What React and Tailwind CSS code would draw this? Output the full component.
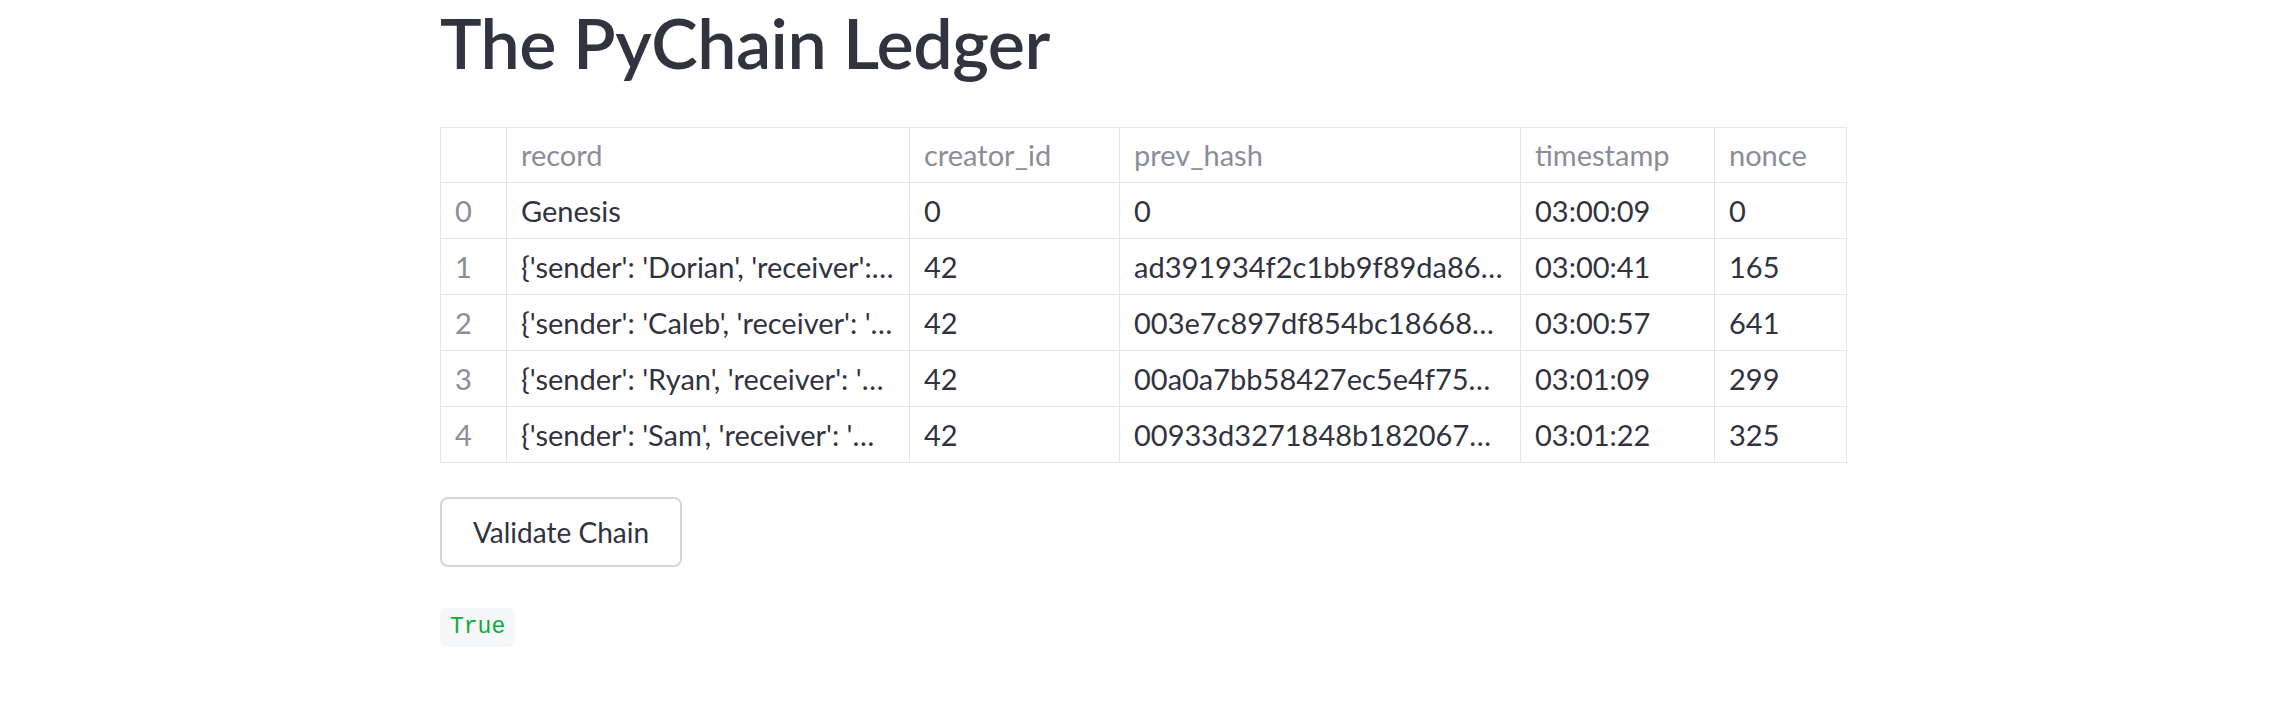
const columns = ["", "record", "creator_id", "prev_hash", "timestamp", "nonce"];

const rows = [
  {
    index: 0,
    record: "Genesis",
    creator_id: "0",
    prev_hash: "0",
    timestamp: "03:00:09",
    nonce: "0",
  },
  {
    index: 1,
    record: "{'sender': 'Dorian', 'receiver': 'Caleb', 'amount': 10.0}",
    creator_id: "42",
    prev_hash: "ad391934f2c1bb9f89da86e1c2b0a7d3f5e4",
    timestamp: "03:00:41",
    nonce: "165",
  },
  {
    index: 2,
    record: "{'sender': 'Caleb', 'receiver': 'Ryan', 'amount': 5.0}",
    creator_id: "42",
    prev_hash: "003e7c897df854bc186686a2f93b1e0c4d7a",
    timestamp: "03:00:57",
    nonce: "641",
  },
  {
    index: 3,
    record: "{'sender': 'Ryan', 'receiver': 'Sam', 'amount': 2.5}",
    creator_id: "42",
    prev_hash: "00a0a7bb58427ec5e4f75b90d1c3e8a6f2b4",
    timestamp: "03:01:09",
    nonce: "299",
  },
  {
    index: 4,
    record: "{'sender': 'Sam', 'receiver': 'Dorian', 'amount': 1.0}",
    creator_id: "42",
    prev_hash: "00933d3271848b1820673f5e9a0c2d4b7e61",
    timestamp: "03:01:22",
    nonce: "325",
  },
];

const widths = ["w-[66px]", "w-[403px]", "w-[210px]", "w-[401px]", "w-[194px]", "w-[132px]"];

const cellBase =
  "border border-[#e6e6e6] px-[14px] whitespace-nowrap overflow-hidden text-ellipsis";

export default function App() {
  return (
    <div className="min-h-[709px] bg-white font-['Lato','Noto_Sans',sans-serif] text-[#31333f]">
      <div className="w-[1407px] mx-auto">
        <h1 className="text-[70px] leading-[84px] font-semibold tracking-[-0.5px] text-[#31333f]">
          The PyChain Ledger
        </h1>

        <table className="mt-[43px] table-fixed border-collapse w-[1407px] text-[29px]">
          <colgroup>
            {widths.map((w, i) => (
              <col key={i} className={w} />
            ))}
          </colgroup>
          <thead>
            <tr className="h-[55px]">
              {columns.map((c, i) => (
                <th
                  key={i}
                  className={`${cellBase} text-left font-normal text-[#8b8d98]`}
                >
                  {c}
                </th>
              ))}
            </tr>
          </thead>
          <tbody>
            {rows.map((r) => (
              <tr key={r.index} className="h-[56px]">
                <td className={`${cellBase} text-[#8b8d98]`}>{r.index}</td>
                <td className={cellBase}>{r.record}</td>
                <td className={cellBase}>{r.creator_id}</td>
                <td className={cellBase}>{r.prev_hash}</td>
                <td className={cellBase}>{r.timestamp}</td>
                <td className={cellBase}>{r.nonce}</td>
              </tr>
            ))}
          </tbody>
        </table>

        <button className="mt-[34px] h-[70px] w-[242px] rounded-[8px] border-2 border-[#d6d6d9] bg-white text-[28px] text-[#31333f]">
          Validate Chain
        </button>

        <div className="mt-[41px]">
          <code className="inline-block rounded-[8px] bg-[#f6f7f9] px-[10px] py-[6px] text-[23px] leading-[27px] text-[#09ab3b] font-['Liberation_Mono',monospace]">
            True
          </code>
        </div>
      </div>
    </div>
  );
}
